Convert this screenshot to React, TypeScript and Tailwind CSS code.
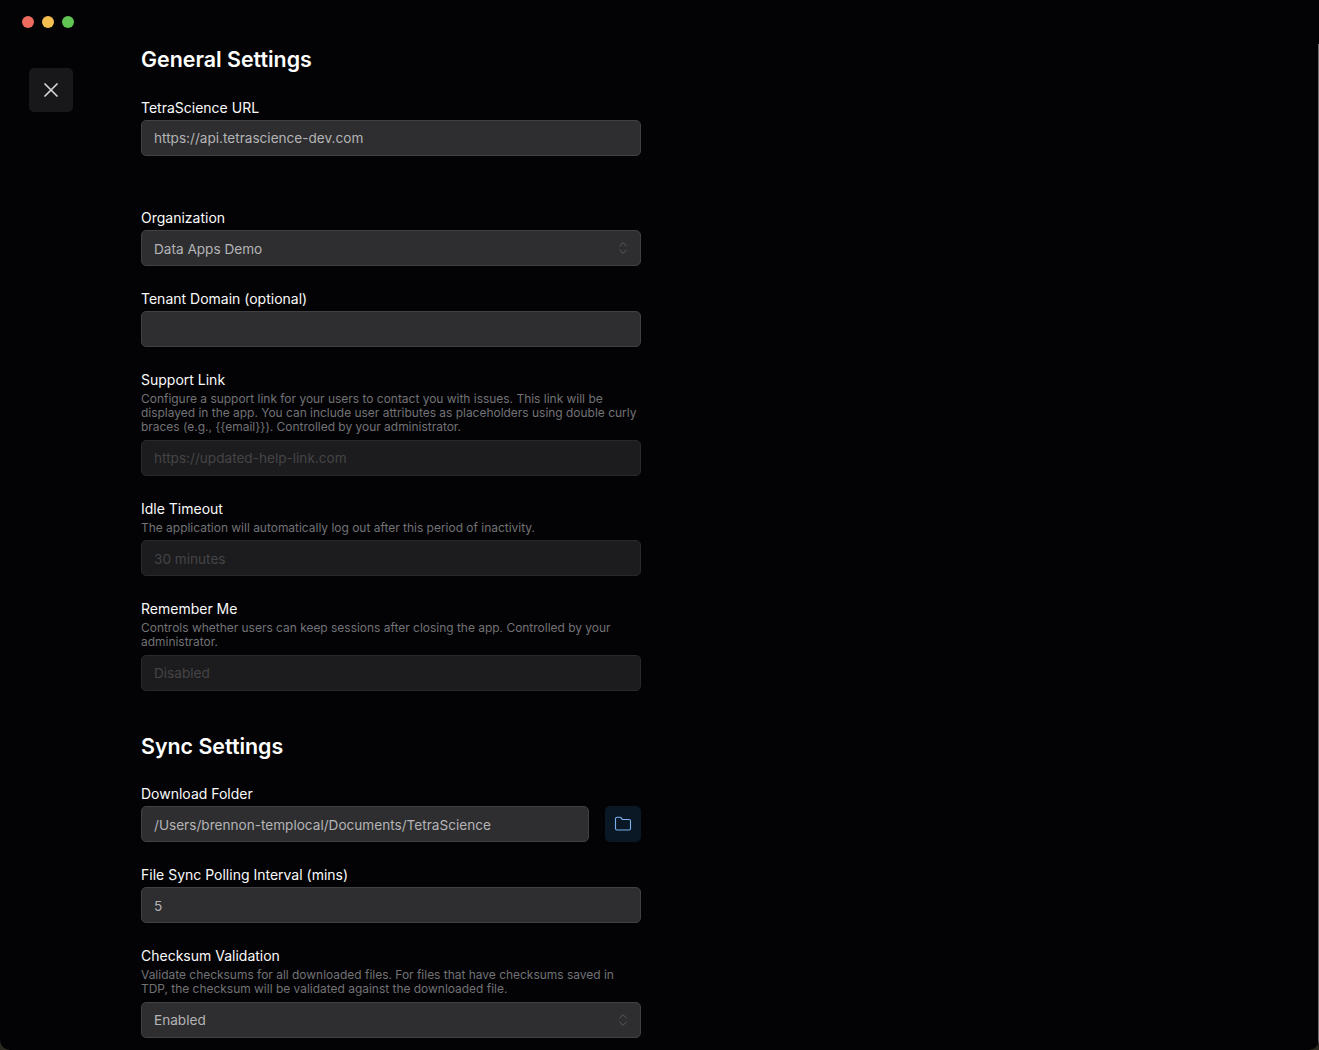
import { ChevronsUpDown, Folder, X } from 'lucide-react';

function Label({ children }: { children: string }) {
  return <label className="block h-5 mb-0.5 text-sm leading-5 font-normal text-[#fafafa]">{children}</label>;
}

function Help({ children, className = 'mb-[6px]' }: { children: string; className?: string }) {
  return <p className={`text-[11.96px] leading-[14px] text-[#727275] ${className}`}>{children}</p>;
}

function TextInput({ value, disabled, lower }: { value: string; disabled?: boolean; lower?: boolean }) {
  return (
    <input
      readOnly
      value={value}
      className={`${lower ? 'pt-[2px]' : ''} ${
        disabled
          ? 'block w-full h-9 px-3 rounded-[5px] border border-[#29292b] bg-[#1c1c1e] text-[13.6px] text-[#444446] outline-none'
          : 'block w-full h-9 px-3 rounded-[5px] border border-[#414143] bg-[#2e2e30] text-[13.6px] text-[#b4b4b6] outline-none'
      }`}
    />
  );
}

function Select({ value, lower }: { value: string; lower?: boolean }) {
  return (
    <button className="flex items-center justify-between w-full h-9 pl-3 pr-[9px] rounded-[5px] border border-[#414143] bg-[#2e2e30] text-[13.6px] text-[#b4b4b6]">
      <span className={lower ? 'pt-[2px]' : ''}>{value}</span>
      <ChevronsUpDown size={16} strokeWidth={1} className="text-[#6f6f71]" />
    </button>
  );
}

export default function App() {
  return (
    <div className="h-[1050px] overflow-hidden bg-[#2a2a20] font-['Inter',sans-serif]">
      <div className="h-full rounded-b-[10px] bg-[#030305] overflow-hidden flex flex-col">
        {/* title bar */}
        <div className="h-11 shrink-0 flex items-center gap-2 pl-[22px]">
          <span className="w-3 h-3 rounded-full bg-[#ec6a5e]" />
          <span className="w-3 h-3 rounded-full bg-[#f4bf4f]" />
          <span className="w-3 h-3 rounded-full bg-[#61c554]" />
        </div>

        <div className="flex flex-1 min-h-0 border-r border-[#6e6e70]">
          <div className="w-[141px] shrink-0 pl-[29px] pt-6">
            <button className="flex items-center justify-center w-11 h-11 rounded-[5px] bg-[#18181a] text-[#d4d4d6]">
              <X size={24} strokeWidth={1.75} />
            </button>
          </div>

          <main className="w-[500px]">
            <h2 className="h-[30px] text-[21.4px] leading-[30px] font-semibold text-white mb-6">General Settings</h2>

            <Label>TetraScience URL</Label>
            <TextInput value="https://api.tetrascience-dev.com" />

            <div className="mt-[52px]">
              <Label>Organization</Label>
              <Select value="Data Apps Demo" lower />
            </div>

            <div className="mt-[23px]">
              <Label>Tenant Domain (optional)</Label>
              <TextInput value="" />
            </div>

            <div className="mt-[23px]">
              <Label>Support Link</Label>
              <Help>
                Configure a support link for your users to contact you with issues. This link will be displayed in the app. You can include user attributes as placeholders using double curly braces (e.g., {'{{email}}'}). Controlled by your administrator.
              </Help>
              <TextInput value="https://updated-help-link.com" disabled />
            </div>

            <div className="mt-[23px]">
              <Label>Idle Timeout</Label>
              <Help className="mb-[5px]">The application will automatically log out after this period of inactivity.</Help>
              <TextInput value="30 minutes" disabled lower />
            </div>

            <div className="mt-[23px]">
              <Label>Remember Me</Label>
              <Help>Controls whether users can keep sessions after closing the app. Controlled by your administrator.</Help>
              <TextInput value="Disabled" disabled />
            </div>

            <h2 className="h-[30px] mt-10 text-[21.4px] leading-[30px] font-semibold text-white mb-[23px]">Sync Settings</h2>

            <Label>Download Folder</Label>
            <div className="flex gap-4">
              <div className="flex-1">
                <TextInput value="/Users/brennon-templocal/Documents/TetraScience" lower />
              </div>
              <button className="flex items-center justify-center w-9 h-9 rounded-[5px] bg-[#0a1725] text-[#7ab0f0]">
                <Folder size={18} strokeWidth={1.5} />
              </button>
            </div>

            <div className="mt-[23px]">
              <Label>File Sync Polling Interval (mins)</Label>
              <TextInput value="5" lower />
            </div>

            <div className="mt-[23px]">
              <Label>Checksum Validation</Label>
              <Help>Validate checksums for all downloaded files. For files that have checksums saved in TDP, the checksum will be validated against the downloaded file.</Help>
              <Select value="Enabled" />
            </div>
          </main>
        </div>
      </div>
    </div>
  );
}
